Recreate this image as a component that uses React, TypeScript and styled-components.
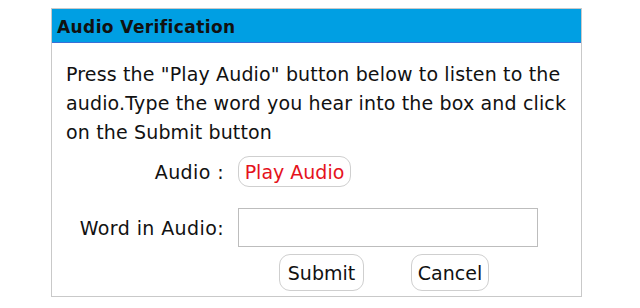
import styled, { createGlobalStyle } from 'styled-components'

const GlobalStyle = createGlobalStyle`
  body {
    margin: 0;
    background: #fff;
    font-family: "Comic Sans MS", "DejaVu Sans", sans-serif;
    color: #111;
  }
`

const Panel = styled.div`
  margin: 8px 0 0 51px;
  width: 531px;
  height: 289px;
  border: 1px solid #c9c9c9;
  box-sizing: border-box;
`

const Header = styled.div`
  height: 34px;
  background: #009fe3;
  border-bottom: 1px solid #3b6fd6;
  box-sizing: border-box;
  display: flex;
  align-items: center;
  padding: 2px 0 0 5px;
  font-size: 17px;
  font-weight: bold;
  letter-spacing: 0.4px;
`

const Body = styled.div`
  padding: 17px 6px 0 14px;
`

const Intro = styled.p`
  margin: 0;
  font-size: 19px;
  line-height: 29px;
  letter-spacing: 0.15px;
  white-space: nowrap;
`

const Form = styled.div`
  display: grid;
  grid-template-columns: 172px 1fr;
  column-gap: 14px;
  align-items: center;
  margin-top: 9px;
`

const Label = styled.label<{ $top?: number }>`
  font-size: 19px;
  letter-spacing: 0.4px;
  text-align: right;
  margin-top: ${p => p.$top ?? 0}px;
`

const Button = styled.button<{ $danger?: boolean; $w: number }>`
  font-family: inherit;
  font-size: 19px;
  width: ${p => p.$w}px;
  height: ${p => (p.$danger ? 31 : 37)}px;
  padding: 0;
  background: #fff;
  color: ${p => (p.$danger ? '#e5121c' : '#111')};
  border: 1px solid #cfcfcf;
  border-radius: 11px;
  cursor: pointer;
`

const Input = styled.input`
  width: 300px;
  height: 39px;
  box-sizing: border-box;
  border: 1px solid #bdbdbd;
  font-family: inherit;
  font-size: 18px;
  padding: 0 4px;
`

const Controls = styled.div<{ $top?: number }>`
  display: flex;
  margin-top: ${p => p.$top ?? 0}px;
`

const Actions = styled.div`
  display: flex;
  gap: 47px;
  margin-left: 41px;
`

function App() {
  return (
    <>
      <GlobalStyle />
      <Panel>
        <Header>Audio Verification</Header>
        <Body>
          <Intro>
            Press the "Play Audio" button below to listen to the
            <br />
            audio.Type the word you hear into the box and click
            <br />
            on the Submit button
          </Intro>
        </Body>
        <Form>
          <Label>Audio :</Label>
          <Controls>
            <Button $danger $w={113}>Play Audio</Button>
          </Controls>
          <Label $top={21}>Word in Audio:</Label>
          <Controls $top={21}>
            <Input />
          </Controls>
          <span />
          <Controls $top={7}>
            <Actions>
              <Button $w={85}>Submit</Button>
              <Button $w={78}>Cancel</Button>
            </Actions>
          </Controls>
        </Form>
      </Panel>
    </>
  )
}

export default App
